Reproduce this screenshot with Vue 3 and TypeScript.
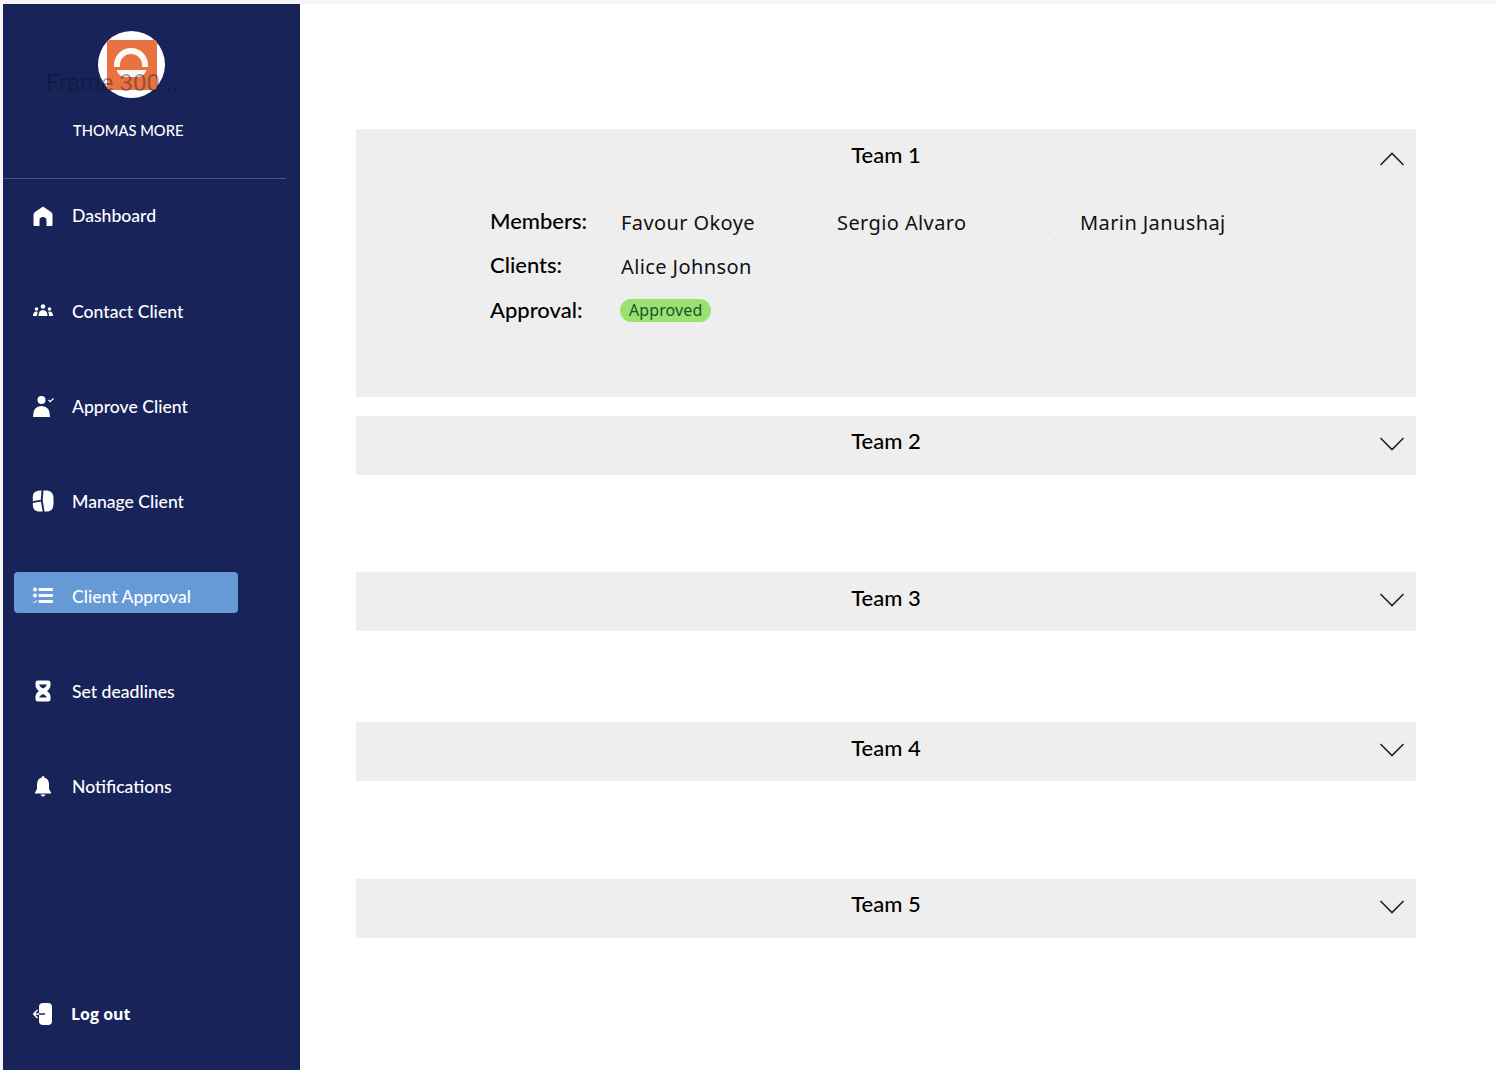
<script setup lang="ts">
interface NavItem {
  label: string
  icon: string
  active?: boolean
}

interface Team {
  name: string
  open: boolean
}

const nav: NavItem[] = [
  { label: 'Dashboard', icon: 'home' },
  { label: 'Contact Client', icon: 'group' },
  { label: 'Approve Client', icon: 'approve' },
  { label: 'Manage Client', icon: 'manage' },
  { label: 'Client Approval', icon: 'list', active: true },
  { label: 'Set deadlines', icon: 'hourglass' },
  { label: 'Notifications', icon: 'bell' }
]

const teams: Team[] = [
  { name: 'Team 1', open: true },
  { name: 'Team 2', open: false },
  { name: 'Team 3', open: false },
  { name: 'Team 4', open: false },
  { name: 'Team 5', open: false }
]
</script>

<template>
  <div class="page">
    <aside class="sidebar">
      <header class="brand">
        <div class="avatar">
          <svg class="logo" viewBox="0 0 50 50" width="50" height="50">
            <rect width="50" height="50" rx="3" fill="#e97340" />
            <path d="M7 27 V25 A17 17 0 0 1 41 25 V27 H35 V25 A11 11 0 0 0 13 25 V27 Z" fill="#fff" opacity=".95" />
            <path d="M9.500 30 H39.500 Q37 37 31 37 H18 Q12 37 9.500 30 Z" fill="#fff" opacity=".95" />
          </svg>
          <span class="alt-text">Frame 300...</span>
        </div>
        <div class="org">THOMAS MORE</div>
      </header>

      <nav class="nav">
        <a v-for="item in nav" :key="item.label" class="nav-item" :class="{ active: item.active }">
          <span class="pill">
            <svg class="icon" viewBox="0 0 24 24" width="24" height="24" fill="#fff">
              <path v-if="item.icon === 'home'" fill-rule="evenodd" d="M12 2.500 L20 8 Q21.500 9 21.500 11 V21 Q21.500 22 20.500 22 H15.500 V16.500 A3.500 3.500 0 0 0 8.500 16.500 V22 H3.500 Q2.500 22 2.500 21 V11 Q2.500 9 4 8 Z" />
              <g v-else-if="item.icon === 'group'">
                <circle cx="12" cy="7.500" r="2.300" />
                <circle cx="5.500" cy="10" r="1.800" />
                <circle cx="18.500" cy="10" r="1.800" />
                <path d="M7.500 17 Q7.500 11 12 11 Q16.500 11 16.500 17 Z" />
                <path d="M2 17 Q2 12.500 5.500 12.500 L6.800 12.800 Q6 14.500 6 17 Z" />
                <path d="M22 17 Q22 12.500 18.500 12.500 L17.200 12.800 Q18 14.500 18 17 Z" />
              </g>
              <g v-else-if="item.icon === 'approve'">
                <circle cx="10.500" cy="6" r="4" />
                <path d="M2 23 Q2 12 10.500 12 Q19 12 19 23 Z" />
                <path d="M17.500 6 L19.200 7.600 L22.500 4.500" fill="none" stroke="#fff" stroke-width="1.300" />
              </g>
              <g v-else-if="item.icon === 'manage'">
                <path d="M10.500 1.500 L9.800 10.800 L1.800 12.300 V8 Q1.800 2.500 7 1.700 Z" />
                <path d="M12.500 1.500 H16 Q22.500 2 22.500 9 V15 Q22.500 22 16 22.500 H13.500 L11.700 11 Z" />
                <path d="M9.900 12.500 L11.700 22.500 H8 Q1.800 22 1.800 16 V14 Z" />
              </g>
              <g v-else-if="item.icon === 'list'">
                <circle cx="4" cy="5.500" r="2" />
                <circle cx="4" cy="11.500" r="2" />
                <path d="M2 17.500 L3.500 19 L6 16" fill="none" stroke="#fff" stroke-width="1" />
                <rect x="7.500" y="4" width="14.500" height="3" rx="1" />
                <rect x="7.500" y="10" width="14.500" height="3" rx="1" />
                <rect x="7.500" y="16" width="14.500" height="3" rx="1" />
              </g>
              <path v-else-if="item.icon === 'hourglass'" fill-rule="evenodd" d="M7 1.500 H17 Q19.500 1.500 19.500 4 V6 Q19.500 9.500 16 12 Q19.500 14.500 19.500 18 V20 Q19.500 22.500 17 22.500 H7 Q4.500 22.500 4.500 20 V18 Q4.500 14.500 8 12 Q4.500 9.500 4.500 6 V4 Q4.500 1.500 7 1.500 Z M8 5.500 Q8.500 7.500 12 9.500 Q15.500 7.500 16 5.500 Z M12 15 Q8.500 16.500 8 18.500 H16 Q15.500 16.500 12 15 Z" />
              <g v-else-if="item.icon === 'bell'">
                <path d="M12 2 Q13.500 2 13.500 3.800 Q18 5 18 10.500 V15 L20 18.500 V19.500 H4 V18.500 L6 15 V10.500 Q6 5 10.500 3.800 Q10.500 2 12 2 Z" />
                <path d="M9.500 20.500 H14.500 Q14 22.500 12 22.500 Q10 22.500 9.500 20.500 Z" />
              </g>
            </svg>
            <span class="nav-label">{{ item.label }}</span>
          </span>
        </a>
      </nav>

      <a class="logout">
        <svg class="icon" viewBox="0 0 24 24" width="24" height="24" fill="#fff">
          <rect x="7" y="1" width="13" height="22" rx="4" />
          <path d="M1.500 12 L5.500 8 M1.500 12 L5.500 16 M1.500 12 H13" fill="none" stroke="#fff" stroke-width="1.500" />
          <path d="M7 12 H13" stroke="#18235a" stroke-width="1.500" />
        </svg>
        <span>Log out</span>
      </a>
    </aside>

    <main class="main">
      <section v-for="team in teams" :key="team.name" class="team" :class="{ open: team.open }">
        <div class="team-head">
          <h2>{{ team.name }}</h2>
          <svg class="chevron" viewBox="0 0 26 16" width="26" height="16" fill="none" stroke="#222" stroke-width="1.600">
            <path :d="team.open ? 'M1.500 14 L13 2.500 L24.500 14' : 'M1.500 2 L13 13.500 L24.500 2'" />
          </svg>
        </div>
        <div v-if="team.open" class="details">
          <div class="label members">Members:</div>
          <div class="value">Favour Okoye</div>
          <div class="value">Sergio Alvaro</div>
          <div class="value dotted">Marin Janushaj</div>
          <div class="label clients">Clients:</div>
          <div class="value wide">Alice Johnson</div>
          <div class="label">Approval:</div>
          <div class="wide"><span class="badge">Approved</span></div>
        </div>
      </section>
    </main>
  </div>
</template>

<style>
html, body { margin: 0; background: #fff; }
</style>

<style scoped>
.page {
  display: flex;
  width: 1496px;
  height: 1070px;
  box-sizing: border-box;
  padding: 4px 0 0 3px;
  overflow: hidden;
  background: #f5f5f5;
  font-family: Lato, "Noto Sans", sans-serif;
}
.sidebar {
  display: flex;
  flex-direction: column;
  flex: none;
  width: 297px;
  background: #18235a;
  color: #fff;
}
.brand {
  height: 175px;
  box-sizing: border-box;
  margin-right: 14px;
  padding-top: 27px;
  border-bottom: 1px solid #4a5279;
}
.avatar {
  position: relative;
  display: flex;
  align-items: center;
  justify-content: center;
  width: 67px;
  height: 67px;
  margin-left: 95px;
  border-radius: 50%;
  background: #fff;
}
.logo { display: block; margin-top: 1px; }
.alt-text {
  position: absolute;
  left: -52px;
  top: 38px;
  white-space: nowrap;
  font: 24px Roboto, sans-serif;
  color: rgba(10, 12, 30, 0.38);
}
.org {
  margin: 23px 0 0 70px;
  font-size: 14.7px;
  font-weight: 500;
  line-height: 18px;
}
.nav {
  display: flex;
  flex-direction: column;
  gap: 54px;
  margin-top: 16px;
  padding-left: 11px;
}
.nav-item {
  display: block;
  height: 41px;
}
.pill {
  display: flex;
  align-items: center;
  gap: 17px;
  width: 224px;
  height: 41px;
  box-sizing: border-box;
  padding-left: 17px;
  border-radius: 4px;
  font-size: 17.6px;
  font-weight: 500;
  line-height: 24px;
}
.nav-label { padding-top: 2px; }
.nav-item:first-child .nav-label { padding-top: 0; }
.active .pill {
  margin-top: -3px;
  padding-top: 6px;
  background: #669ad6;
}
.icon { flex: none; width: 24px; height: 24px; }
.logout {
  display: flex;
  align-items: center;
  gap: 15px;
  margin-top: auto;
  margin-bottom: 44px;
  padding-left: 29px;
  font: 700 16px "Open Sans", sans-serif;
}
.main {
  flex: 1;
  padding: 125px 80px 0 56px;
  background: #fff;
}
.team {
  background: #eee;
  height: 59px;
}
.team.open { height: 268px; }
.team:nth-child(2) { margin-top: 19px; }
.team:nth-child(3) { margin-top: 97px; }
.team:nth-child(4) { margin-top: 91px; }
.team:nth-child(5) { margin-top: 98px; }
.team-head {
  position: relative;
  display: flex;
  justify-content: center;
  height: 59px;
}
.team-head h2 {
  margin: 11px 0 0;
  font-size: 22px;
  font-weight: 500;
  line-height: 28px;
  color: #000;
}
.open .team-head h2,
.team:nth-child(3) .team-head h2,
.team:nth-child(4) .team-head h2 { margin-top: 12px; }
.chevron {
  position: absolute;
  right: 11px;
  top: 20px;
}
.open .chevron { top: 22px; }
.details {
  display: grid;
  grid-template-columns: 131px 216px 243px auto;
  grid-auto-rows: 44px;
  align-items: center;
  margin-top: 12px;
  padding-left: 134px;
  color: #000;
}
.label { font-size: 22px; font-weight: 500; padding-bottom: 2px; }
.label.members { padding-bottom: 4px; }
.label.clients { padding-bottom: 4px; }
.value {
  font: 20px "Noto Sans", sans-serif;
  letter-spacing: 0.4px;
  color: #111;
}
.dotted { position: relative; }
.dotted::before {
  content: "";
  position: absolute;
  left: -32px;
  top: 23px;
  width: 2px;
  height: 1px;
  background: #ddd;
  box-shadow: 9px 0 0 #ddd;
}
.wide { grid-column: 2 / -1; }
.badge {
  display: inline-block;
  margin-left: -1px;
  padding: 0 9px;
  border-radius: 12px;
  background: #99e272;
  color: #20502a;
  font: 16px/23px "Noto Sans", sans-serif;
  letter-spacing: 0.1px;
}
</style>
